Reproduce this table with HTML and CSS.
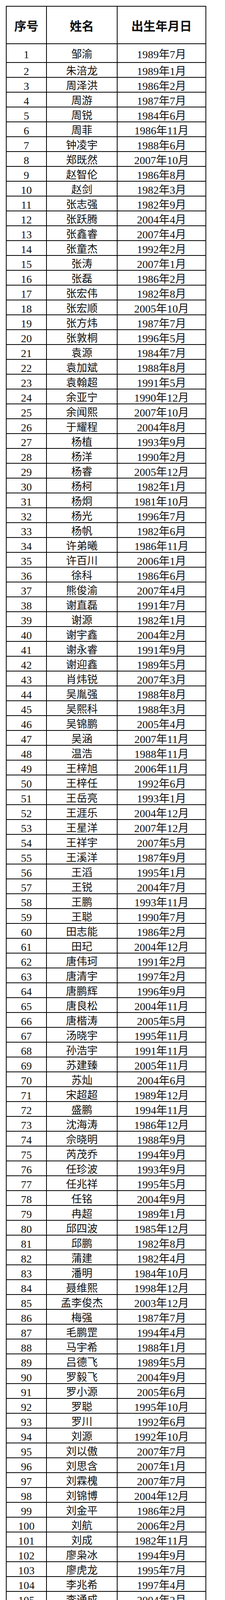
FILE: index.html
```html
<!DOCTYPE html>
<html lang="zh-CN">
<head>
<meta charset="utf-8">
<title>名单</title>
<link rel="stylesheet" href="styles.css">
</head>
<body>
<div class="sheet" role="table">
<div class="row" role="row"><div class="cell hd">序号</div><div class="cell hd">姓名</div><div class="cell hd">出生年月日</div></div>
<div class="row"><div class="cell num">1</div><div class="cell name">邹渝</div><div class="cell date">1989年7月</div></div>
<div class="row"><div class="cell num">2</div><div class="cell name">朱涪龙</div><div class="cell date">1989年1月</div></div>
<div class="row"><div class="cell num">3</div><div class="cell name">周泽洪</div><div class="cell date">1986年2月</div></div>
<div class="row"><div class="cell num">4</div><div class="cell name">周游</div><div class="cell date">1987年7月</div></div>
<div class="row"><div class="cell num">5</div><div class="cell name">周锐</div><div class="cell date">1984年6月</div></div>
<div class="row"><div class="cell num">6</div><div class="cell name">周菲</div><div class="cell date">1986年11月</div></div>
<div class="row"><div class="cell num">7</div><div class="cell name">钟凌宇</div><div class="cell date">1988年6月</div></div>
<div class="row"><div class="cell num">8</div><div class="cell name">郑既然</div><div class="cell date">2007年10月</div></div>
<div class="row"><div class="cell num">9</div><div class="cell name">赵智伦</div><div class="cell date">1986年8月</div></div>
<div class="row"><div class="cell num">10</div><div class="cell name">赵剑</div><div class="cell date">1982年3月</div></div>
<div class="row"><div class="cell num">11</div><div class="cell name">张志强</div><div class="cell date">1982年9月</div></div>
<div class="row"><div class="cell num">12</div><div class="cell name">张跃腾</div><div class="cell date">2004年4月</div></div>
<div class="row"><div class="cell num">13</div><div class="cell name">张鑫睿</div><div class="cell date">2007年4月</div></div>
<div class="row"><div class="cell num">14</div><div class="cell name">张童杰</div><div class="cell date">1992年2月</div></div>
<div class="row"><div class="cell num">15</div><div class="cell name">张涛</div><div class="cell date">2007年1月</div></div>
<div class="row"><div class="cell num">16</div><div class="cell name">张磊</div><div class="cell date">1986年2月</div></div>
<div class="row"><div class="cell num">17</div><div class="cell name">张宏伟</div><div class="cell date">1982年8月</div></div>
<div class="row"><div class="cell num">18</div><div class="cell name">张宏顺</div><div class="cell date">2005年10月</div></div>
<div class="row"><div class="cell num">19</div><div class="cell name">张方炜</div><div class="cell date">1987年7月</div></div>
<div class="row"><div class="cell num">20</div><div class="cell name">张敦桐</div><div class="cell date">1996年5月</div></div>
<div class="row"><div class="cell num">21</div><div class="cell name">袁源</div><div class="cell date">1984年7月</div></div>
<div class="row"><div class="cell num">22</div><div class="cell name">袁加斌</div><div class="cell date">1988年8月</div></div>
<div class="row"><div class="cell num">23</div><div class="cell name">袁翰超</div><div class="cell date">1991年5月</div></div>
<div class="row"><div class="cell num">24</div><div class="cell name">余亚宁</div><div class="cell date">1990年12月</div></div>
<div class="row"><div class="cell num">25</div><div class="cell name">余闻熙</div><div class="cell date">2007年10月</div></div>
<div class="row"><div class="cell num">26</div><div class="cell name">于耀程</div><div class="cell date">2004年8月</div></div>
<div class="row"><div class="cell num">27</div><div class="cell name">杨植</div><div class="cell date">1993年9月</div></div>
<div class="row"><div class="cell num">28</div><div class="cell name">杨洋</div><div class="cell date">1990年2月</div></div>
<div class="row"><div class="cell num">29</div><div class="cell name">杨睿</div><div class="cell date">2005年12月</div></div>
<div class="row"><div class="cell num">30</div><div class="cell name">杨柯</div><div class="cell date">1982年1月</div></div>
<div class="row"><div class="cell num">31</div><div class="cell name">杨炯</div><div class="cell date">1981年10月</div></div>
<div class="row"><div class="cell num">32</div><div class="cell name">杨光</div><div class="cell date">1996年7月</div></div>
<div class="row"><div class="cell num">33</div><div class="cell name">杨帆</div><div class="cell date">1982年6月</div></div>
<div class="row"><div class="cell num">34</div><div class="cell name">许弟曦</div><div class="cell date">1986年11月</div></div>
<div class="row"><div class="cell num">35</div><div class="cell name">许百川</div><div class="cell date">2006年1月</div></div>
<div class="row"><div class="cell num">36</div><div class="cell name">徐科</div><div class="cell date">1986年6月</div></div>
<div class="row"><div class="cell num">37</div><div class="cell name">熊俊渝</div><div class="cell date">2007年4月</div></div>
<div class="row"><div class="cell num">38</div><div class="cell name">谢直磊</div><div class="cell date">1991年7月</div></div>
<div class="row"><div class="cell num">39</div><div class="cell name">谢源</div><div class="cell date">1982年1月</div></div>
<div class="row"><div class="cell num">40</div><div class="cell name">谢宇鑫</div><div class="cell date">2004年2月</div></div>
<div class="row"><div class="cell num">41</div><div class="cell name">谢永睿</div><div class="cell date">1991年9月</div></div>
<div class="row"><div class="cell num">42</div><div class="cell name">谢迎鑫</div><div class="cell date">1989年5月</div></div>
<div class="row"><div class="cell num">43</div><div class="cell name">肖炜锐</div><div class="cell date">2007年3月</div></div>
<div class="row"><div class="cell num">44</div><div class="cell name">吴胤强</div><div class="cell date">1988年8月</div></div>
<div class="row"><div class="cell num">45</div><div class="cell name">吴熙科</div><div class="cell date">1988年3月</div></div>
<div class="row"><div class="cell num">46</div><div class="cell name">吴锦鹏</div><div class="cell date">2005年4月</div></div>
<div class="row"><div class="cell num">47</div><div class="cell name">吴涵</div><div class="cell date">2007年11月</div></div>
<div class="row"><div class="cell num">48</div><div class="cell name">温浩</div><div class="cell date">1988年11月</div></div>
<div class="row"><div class="cell num">49</div><div class="cell name">王梓旭</div><div class="cell date">2006年11月</div></div>
<div class="row"><div class="cell num">50</div><div class="cell name">王梓任</div><div class="cell date">1992年6月</div></div>
<div class="row"><div class="cell num">51</div><div class="cell name">王岳亮</div><div class="cell date">1993年1月</div></div>
<div class="row"><div class="cell num">52</div><div class="cell name">王涯乐</div><div class="cell date">2004年12月</div></div>
<div class="row"><div class="cell num">53</div><div class="cell name">王星洋</div><div class="cell date">2007年12月</div></div>
<div class="row"><div class="cell num">54</div><div class="cell name">王祥宇</div><div class="cell date">2007年5月</div></div>
<div class="row"><div class="cell num">55</div><div class="cell name">王溪洋</div><div class="cell date">1987年9月</div></div>
<div class="row"><div class="cell num">56</div><div class="cell name">王滔</div><div class="cell date">1995年1月</div></div>
<div class="row"><div class="cell num">57</div><div class="cell name">王锐</div><div class="cell date">2004年7月</div></div>
<div class="row"><div class="cell num">58</div><div class="cell name">王鹏</div><div class="cell date">1993年11月</div></div>
<div class="row"><div class="cell num">59</div><div class="cell name">王聪</div><div class="cell date">1990年7月</div></div>
<div class="row"><div class="cell num">60</div><div class="cell name">田志能</div><div class="cell date">1986年2月</div></div>
<div class="row"><div class="cell num">61</div><div class="cell name">田玘</div><div class="cell date">2004年12月</div></div>
<div class="row"><div class="cell num">62</div><div class="cell name">唐伟珂</div><div class="cell date">1991年2月</div></div>
<div class="row"><div class="cell num">63</div><div class="cell name">唐清宇</div><div class="cell date">1997年2月</div></div>
<div class="row"><div class="cell num">64</div><div class="cell name">唐鹏辉</div><div class="cell date">1996年9月</div></div>
<div class="row"><div class="cell num">65</div><div class="cell name">唐良松</div><div class="cell date">2004年11月</div></div>
<div class="row"><div class="cell num">66</div><div class="cell name">唐楷涛</div><div class="cell date">2005年5月</div></div>
<div class="row"><div class="cell num">67</div><div class="cell name">汤晓宇</div><div class="cell date">1995年11月</div></div>
<div class="row"><div class="cell num">68</div><div class="cell name">孙浩宇</div><div class="cell date">1991年11月</div></div>
<div class="row"><div class="cell num">69</div><div class="cell name">苏建臻</div><div class="cell date">2005年11月</div></div>
<div class="row"><div class="cell num">70</div><div class="cell name">苏灿</div><div class="cell date">2004年6月</div></div>
<div class="row"><div class="cell num">71</div><div class="cell name">宋超超</div><div class="cell date">1989年12月</div></div>
<div class="row"><div class="cell num">72</div><div class="cell name">盛鹏</div><div class="cell date">1994年11月</div></div>
<div class="row"><div class="cell num">73</div><div class="cell name">沈海涛</div><div class="cell date">1986年12月</div></div>
<div class="row"><div class="cell num">74</div><div class="cell name">佘晓明</div><div class="cell date">1988年9月</div></div>
<div class="row"><div class="cell num">75</div><div class="cell name">芮茂乔</div><div class="cell date">1994年9月</div></div>
<div class="row"><div class="cell num">76</div><div class="cell name">任珍波</div><div class="cell date">1993年9月</div></div>
<div class="row"><div class="cell num">77</div><div class="cell name">任兆祥</div><div class="cell date">1995年5月</div></div>
<div class="row"><div class="cell num">78</div><div class="cell name">任铭</div><div class="cell date">2004年9月</div></div>
<div class="row"><div class="cell num">79</div><div class="cell name">冉超</div><div class="cell date">1989年1月</div></div>
<div class="row"><div class="cell num">80</div><div class="cell name">邱四波</div><div class="cell date">1985年12月</div></div>
<div class="row"><div class="cell num">81</div><div class="cell name">邱鹏</div><div class="cell date">1982年8月</div></div>
<div class="row"><div class="cell num">82</div><div class="cell name">蒲建</div><div class="cell date">1982年4月</div></div>
<div class="row"><div class="cell num">83</div><div class="cell name">潘明</div><div class="cell date">1984年10月</div></div>
<div class="row"><div class="cell num">84</div><div class="cell name">聂维熙</div><div class="cell date">1998年12月</div></div>
<div class="row"><div class="cell num">85</div><div class="cell name">孟李俊杰</div><div class="cell date">2003年12月</div></div>
<div class="row"><div class="cell num">86</div><div class="cell name">梅强</div><div class="cell date">1987年7月</div></div>
<div class="row"><div class="cell num">87</div><div class="cell name">毛鹏罡</div><div class="cell date">1994年4月</div></div>
<div class="row"><div class="cell num">88</div><div class="cell name">马宇希</div><div class="cell date">1988年1月</div></div>
<div class="row"><div class="cell num">89</div><div class="cell name">吕德飞</div><div class="cell date">1989年5月</div></div>
<div class="row"><div class="cell num">90</div><div class="cell name">罗毅飞</div><div class="cell date">2004年9月</div></div>
<div class="row"><div class="cell num">91</div><div class="cell name">罗小源</div><div class="cell date">2005年6月</div></div>
<div class="row"><div class="cell num">92</div><div class="cell name">罗聪</div><div class="cell date">1995年10月</div></div>
<div class="row"><div class="cell num">93</div><div class="cell name">罗川</div><div class="cell date">1992年6月</div></div>
<div class="row"><div class="cell num">94</div><div class="cell name">刘源</div><div class="cell date">1992年10月</div></div>
<div class="row"><div class="cell num">95</div><div class="cell name">刘以傲</div><div class="cell date">2007年7月</div></div>
<div class="row"><div class="cell num">96</div><div class="cell name">刘思含</div><div class="cell date">2007年1月</div></div>
<div class="row"><div class="cell num">97</div><div class="cell name">刘霖槐</div><div class="cell date">2007年7月</div></div>
<div class="row"><div class="cell num">98</div><div class="cell name">刘锦博</div><div class="cell date">2004年12月</div></div>
<div class="row"><div class="cell num">99</div><div class="cell name">刘金平</div><div class="cell date">1986年2月</div></div>
<div class="row"><div class="cell num">100</div><div class="cell name">刘航</div><div class="cell date">2006年2月</div></div>
<div class="row"><div class="cell num">101</div><div class="cell name">刘成</div><div class="cell date">1982年11月</div></div>
<div class="row"><div class="cell num">102</div><div class="cell name">廖枭冰</div><div class="cell date">1994年9月</div></div>
<div class="row"><div class="cell num">103</div><div class="cell name">廖虎龙</div><div class="cell date">1995年7月</div></div>
<div class="row"><div class="cell num">104</div><div class="cell name">李兆希</div><div class="cell date">1997年4月</div></div>
<div class="row"><div class="cell num">105</div><div class="cell name">李通成</div><div class="cell date">2004年2月</div></div>
<div class="row"><div class="cell num">106</div><div class="cell name">李燃</div><div class="cell date">1987年1月</div></div>
<div class="row"><div class="cell num">107</div><div class="cell name">李基翔</div><div class="cell date">2005年12月</div></div>
<div class="row"><div class="cell num">108</div><div class="cell name">李华</div><div class="cell date">1985年2月</div></div>
<div class="row"><div class="cell num">109</div><div class="cell name">李杭杭</div><div class="cell date">2007年8月</div></div>
<div class="row"><div class="cell num">110</div><div class="cell name">李国栋</div><div class="cell date">1982年1月</div></div>
<div class="row"><div class="cell num">111</div><div class="cell name">李迪临</div><div class="cell date">1994年7月</div></div>
<div class="row"><div class="cell num">112</div><div class="cell name">李德才</div><div class="cell date">2004年7月</div></div>
<div class="row"><div class="cell num">113</div><div class="cell name">黎绪强</div><div class="cell date">1988年2月</div></div>
<div class="row"><div class="cell num">114</div><div class="cell name">雷欣秸</div><div class="cell date">2005年9月</div></div>
<div class="row"><div class="cell num">115</div><div class="cell name">雷平平</div><div class="cell date">1988年10月</div></div>
<div class="row"><div class="cell num">116</div><div class="cell name">兰鑫程</div><div class="cell date">2007年8月</div></div>
<div class="row"><div class="cell num">117</div><div class="cell name">蒋滕</div><div class="cell date">1988年8月</div></div>
<div class="row"><div class="cell num">118</div><div class="cell name">贾天宇</div><div class="cell date">1991年12月</div></div>
<div class="row"><div class="cell num">119</div><div class="cell name">贾凯淞</div><div class="cell date">2004年10月</div></div>
<div class="row"><div class="cell num">120</div><div class="cell name name-left">季斯锐</div><div class="cell date">1989年1月</div></div>
<div class="row"><div class="cell num">121</div><div class="cell name">黄一凡</div><div class="cell date">1996年11月</div></div>
<div class="row"><div class="cell num">122</div><div class="cell name">黄文强</div><div class="cell date">1992年3月</div></div>
<div class="row"><div class="cell num">123</div><div class="cell name">黄科铭</div><div class="cell date">2006年9月</div></div>
<div class="row"><div class="cell num">124</div><div class="cell name">黄浩程</div><div class="cell date">2004年12月</div></div>
<div class="row"><div class="cell num">125</div><div class="cell name">胡鑫</div><div class="cell date">1988年3月</div></div>
<div class="row"><div class="cell num">126</div><div class="cell name">何志鑫</div><div class="cell date">1992年1月</div></div>
<div class="row"><div class="cell num">127</div><div class="cell name">何志然</div><div class="cell date">1983年9月</div></div>
<div class="row"><div class="cell num">128</div><div class="cell name">何玉</div><div class="cell date">1996年7月</div></div>
<div class="row"><div class="cell num">129</div><div class="cell name">何羿</div><div class="cell date">1988年8月</div></div>
<div class="row"><div class="cell num">130</div><div class="cell name">何孟键</div><div class="cell date">1988年1月</div></div>
<div class="row"><div class="cell num">131</div><div class="cell name">何昌豪</div><div class="cell date">2004年4月</div></div>
<div class="row"><div class="cell num">132</div><div class="cell name">韩信勇</div><div class="cell date">1988年8月</div></div>
<div class="row"><div class="cell num">133</div><div class="cell name">郭宗禄</div><div class="cell date">1980年4月</div></div>
<div class="row"><div class="cell num">134</div><div class="cell name">郭路</div><div class="cell date">1988年9月</div></div>
<div class="row"><div class="cell num">135</div><div class="cell name">龚政</div><div class="cell date">1982年4月</div></div>
<div class="row"><div class="cell num">136</div><div class="cell name">耿宇杰</div><div class="cell date">1997年11月</div></div>
<div class="row"><div class="cell num">137</div><div class="cell name">高凡</div><div class="cell date">1992年9月</div></div>
<div class="row"><div class="cell num">138</div><div class="cell name">冯学阳</div><div class="cell date">2004年7月</div></div>
<div class="row"><div class="cell num">139</div><div class="cell name">杜子澔</div><div class="cell date">2007年10月</div></div>
<div class="row"><div class="cell num">140</div><div class="cell name">邓伟</div><div class="cell date">1981年7月</div></div>
<div class="row"><div class="cell num">141</div><div class="cell name">代铭洋</div><div class="cell date">1997年4月</div></div>
<div class="row"><div class="cell num">142</div><div class="cell name">陈小亮</div><div class="cell date">2007年11月</div></div>
<div class="row"><div class="cell num">143</div><div class="cell name">陈伟</div><div class="cell date">1986年8月</div></div>
<div class="row"><div class="cell num">144</div><div class="cell name">陈万博</div><div class="cell date">2005年2月</div></div>
<div class="row"><div class="cell num">145</div><div class="cell name">陈焘</div><div class="cell date">1988年11月</div></div>
<div class="row"><div class="cell num">146</div><div class="cell name">陈适</div><div class="cell date">1988年4月</div></div>
<div class="row"><div class="cell num">147</div><div class="cell name">陈军冉</div><div class="cell date">2007年7月</div></div>
<div class="row"><div class="cell num">148</div><div class="cell name">陈佳勇</div><div class="cell date">1998年2月</div></div>
<div class="row"><div class="cell num">149</div><div class="cell name">陈浩然</div><div class="cell date">1994年6月</div></div>
<div class="row"><div class="cell num">150</div><div class="cell name">曾浪</div><div class="cell date">1994年1月</div></div>
<div class="row"><div class="cell num">151</div><div class="cell name">曾凡</div><div class="cell date">1980年11月</div></div>
<div class="row"><div class="cell num">152</div><div class="cell name">曹宇</div><div class="cell date">1993年2月</div></div>
<div class="row"><div class="cell num">153</div><div class="cell name">蔡文钦</div><div class="cell date">1986年5月</div></div>
<div class="row"><div class="cell num">154</div><div class="cell name">白紫微</div><div class="cell date">1988年10月</div></div>
<div class="row"><div class="cell num">155</div><div class="cell name">褚宇鹏</div><div class="cell date">1985年7月</div></div>
<div class="row"><div class="cell num">156</div><div class="cell name">张锶</div><div class="cell date">1983年2月</div></div>
<div class="row"><div class="cell num">157</div><div class="cell name">孟宇</div><div class="cell date">2006年11月</div></div>
<div class="row"><div class="cell num">158</div><div class="cell name">陈现文</div><div class="cell date">1992年7月</div></div>
<div class="row"><div class="cell num">159</div><div class="cell name">杜正强</div><div class="cell date">1986年3月</div></div>
<div class="row"><div class="cell num">160</div><div class="cell name">罗茂家</div><div class="cell date">2005年2月</div></div>
<div class="row"><div class="cell num">161</div><div class="cell name">蒋鑫涛</div><div class="cell date">2007年1月</div></div>
<div class="row"><div class="cell num">162</div><div class="cell name">刘双</div><div class="cell date">1991年11月</div></div>
<div class="row"><div class="cell num">163</div><div class="cell name">廖敏</div><div class="cell date">1988年11月</div></div>
<div class="row"><div class="cell num">164</div><div class="cell name">陈俊汲</div><div class="cell date">2004年3月</div></div>
<div class="row"><div class="cell num">165</div><div class="cell name">杨东昊</div><div class="cell date">1994年8月</div></div>
<div class="row"><div class="cell num">166</div><div class="cell name">朱可</div><div class="cell date">1993年8月</div></div>
<div class="row"><div class="cell num">167</div><div class="cell name">熊悯昔</div><div class="cell date">2007年1月</div></div>
</div>
</body>
</html>
```

FILE: styles.css
```css
html, body {
  margin: 0;
  padding: 0;
  background: #ffffff;
}

body {
  padding: 15px 0 0 15px;
  color: #111111;
  font-family: "Liberation Serif", "Noto Sans CJK SC", serif;
}

.sheet {
  display: grid;
  box-sizing: border-box;
  width: 513px;
  padding: 2px;
  gap: 2px;
  background: #000000;
  grid-template-columns: 101px 179px 225px;
  grid-template-rows: 94px 46px;
  grid-auto-rows: 36px;
}

.row {
  display: contents;
}

.cell {
  display: flex;
  align-items: center;
  justify-content: center;
  box-sizing: border-box;
  background: #ffffff;
  white-space: nowrap;
  line-height: 30px;
  padding-top: 7px;
  min-width: 0;
  min-height: 0;
}

.hd {
  font-family: "Noto Sans CJK SC", sans-serif;
  font-weight: 700;
  font-size: 31px;
  padding-top: 1px;
}

.num {
  font-size: 28px;
}

.name {
  font-family: "Noto Sans CJK SC", sans-serif;
  font-size: 27px;
  font-weight: 400;
  padding-top: 2px;
}

.name-left {
  padding-right: 16px;
}

.date {
  font-size: 28px;
}
```
